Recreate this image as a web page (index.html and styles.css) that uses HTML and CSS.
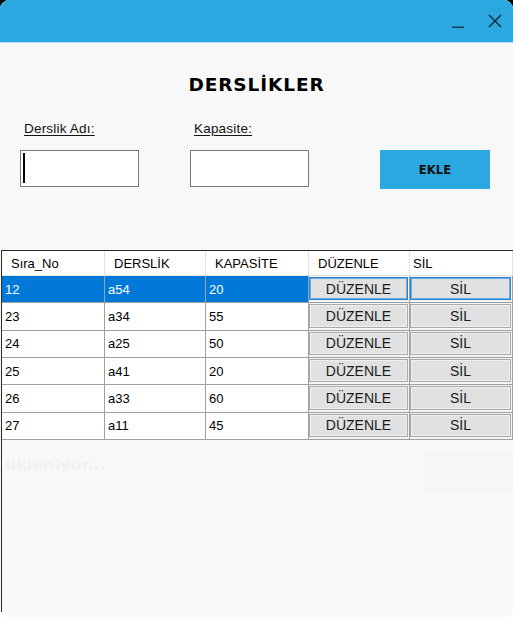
FILE: index.html
```html
<!DOCTYPE html>
<html lang="tr">
<head>
<meta charset="utf-8">
<title>Derslikler</title>
<link rel="stylesheet" href="styles.css">
</head>
<body>
<div class="window">
  <header class="titlebar">
    <div class="controls">
      <svg class="ctrl-min" width="12" height="14" viewBox="0 0 12 14"><rect x="0" y="12.5" width="12" height="1.5" fill="#1d3d57"/></svg>
      <svg class="ctrl-close" width="14" height="14" viewBox="0 0 14 14"><path d="M1 1 L13 13 M13 1 L1 13" stroke="#0f2231" stroke-width="1.4" fill="none"/></svg>
    </div>
  </header>
  <main class="content">
    <h1 class="heading">DERSLİKLER</h1>
    <div class="form">
      <label class="label">Derslik Adı:</label>
      <label class="label">Kapasite:</label>
      <span></span>
      <div class="textbox focused"></div>
      <div class="textbox"></div>
      <button class="add-btn">EKLE</button>
    </div>
    <div class="grid">
      <div class="row head">
        <div class="c c1">Sıra_No</div>
        <div class="c c2">DERSLİK</div>
        <div class="c c3">KAPASİTE</div>
        <div class="c c4">DÜZENLE</div>
        <div class="c c5 last">SİL</div>
      </div>
      <div class="row selected">
        <div class="c c1">12</div><div class="c c2">a54</div><div class="c c3">20</div>
        <div class="c c4 bc"><span class="cellbtn">DÜZENLE</span></div>
        <div class="c c5 bc"><span class="cellbtn">SİL</span></div>
      </div>
      <div class="row">
        <div class="c c1">23</div><div class="c c2">a34</div><div class="c c3">55</div>
        <div class="c c4 bc"><span class="cellbtn">DÜZENLE</span></div>
        <div class="c c5 bc"><span class="cellbtn">SİL</span></div>
      </div>
      <div class="row">
        <div class="c c1">24</div><div class="c c2">a25</div><div class="c c3">50</div>
        <div class="c c4 bc"><span class="cellbtn">DÜZENLE</span></div>
        <div class="c c5 bc"><span class="cellbtn">SİL</span></div>
      </div>
      <div class="row">
        <div class="c c1">25</div><div class="c c2">a41</div><div class="c c3">20</div>
        <div class="c c4 bc"><span class="cellbtn">DÜZENLE</span></div>
        <div class="c c5 bc"><span class="cellbtn">SİL</span></div>
      </div>
      <div class="row">
        <div class="c c1">26</div><div class="c c2">a33</div><div class="c c3">60</div>
        <div class="c c4 bc"><span class="cellbtn">DÜZENLE</span></div>
        <div class="c c5 bc"><span class="cellbtn">SİL</span></div>
      </div>
      <div class="row">
        <div class="c c1">27</div><div class="c c2">a11</div><div class="c c3">45</div>
        <div class="c c4 bc"><span class="cellbtn">DÜZENLE</span></div>
        <div class="c c5 bc"><span class="cellbtn">SİL</span></div>
      </div>
      <div class="ghost-text">ükleniyor...</div>
      <div class="ghost-box"></div>
    </div>
  </main>
</div>
</body>
</html>
```
FILE: styles.css
```css
html, body {
  margin: 0;
  padding: 0;
}
body {
  width: 513px;
  height: 624px;
  background: linear-gradient(to bottom, #000 0, #000 20px, #fff 20px);
  font-family: "Liberation Sans", Arial, sans-serif;
}
.window {
  width: 513px;
  height: 617px;
  display: flex;
  flex-direction: column;
  background: #f8f8f8;
  border-radius: 9px 9px 8px 8px;
  overflow: hidden;
}
.titlebar {
  height: 42px;
  flex: none;
  background: #2ca8e1;
  border-bottom: 1px solid #b4def3;
  display: flex;
  justify-content: flex-end;
  align-items: flex-start;
}
.controls {
  display: flex;
  gap: 24px;
  padding: 14px 11px 0 0;
}
.controls svg {
  display: block;
}
.content {
  flex: 1;
  display: flex;
  flex-direction: column;
  position: relative;
}
.heading {
  margin: 31px 0 0;
  height: 22px;
  line-height: 22px;
  text-align: center;
  font-family: "DejaVu Sans", Verdana, sans-serif;
  font-weight: bold;
  font-size: 18.5px;
  letter-spacing: 0.9px;
  color: #000;
}
.form {
  margin: 25px 0 0 20px;
  display: grid;
  grid-template-columns: 119px 119px 110px;
  column-gap: 51px;
  row-gap: 13px;
  align-items: start;
}
.label {
  padding-left: 4px;
  height: 16px;
  line-height: 16px;
  font-size: 13.5px;
  letter-spacing: 0.2px;
  color: #111;
  text-decoration: underline;
  text-underline-offset: 2px;
}
.textbox {
  height: 37px;
  box-sizing: border-box;
  background: #fff;
  border: 1px solid #7a7a7a;
  position: relative;
}
.textbox.focused::after {
  content: "";
  position: absolute;
  left: 2px;
  top: 2px;
  width: 2px;
  height: 30px;
  background: #000;
}
.add-btn {
  margin: 0 0 0 20px;
  width: 110px;
  height: 39px;
  border: none;
  background: #2ca8e1;
  color: #111;
  font-family: "DejaVu Sans Condensed", Tahoma, sans-serif;
  font-weight: bold;
  font-size: 13px;
  padding: 0;
}
.grid {
  margin: 61px 0 5px 1px;
  flex: 1;
  width: 512px;
  box-sizing: border-box;
  border-top: 1px solid #2a2a2a;
  border-left: 1px solid #2a2a2a;
  position: relative;
  overflow: hidden;
  font-size: 13px;
  color: #000;
}
.row {
  display: flex;
  height: 27.34px;
  box-sizing: border-box;
  border-bottom: 1px solid #a0a0a0;
  background: #fff;
}
.row.head {
  height: 25px;
  border-bottom: 1px solid #e4e4e4;
}
.c {
  box-sizing: border-box;
  border-right: 1px solid #a0a0a0;
  display: flex;
  align-items: center;
  padding-left: 3px;
  white-space: nowrap;
}
.head .c {
  border-right-color: #e4e4e4;
  padding-left: 9px;
}
.head .c.last {
  padding-left: 3px;
}
.c1 { width: 103px; }
.c2 { width: 101px; }
.c3 { width: 103px; }
.c4 { width: 101px; }
.c5 { width: 103px; }
.selected .c {
  background: #0078d7;
  color: #fff;
}
.selected .c.bc,
.c.bc {
  background: #f4f4f4;
  color: #1a1a1a;
  padding: 1px 1px 2px 0;
  align-items: stretch;
}
.cellbtn {
  flex: 1;
  display: flex;
  align-items: center;
  justify-content: center;
  background: #e1e1e1;
  border: 1px solid #a9a9a9;
  box-shadow: inset 0 0 0 1px #f0f0f0;
  font-size: 14px;
  color: #1a1a1a;
}
.selected .cellbtn {
  border-color: #2b84d3;
  box-shadow: inset 0 0 0 1px #6aaee6;
}
.ghost-text {
  position: absolute;
  left: 3px;
  top: 204px;
  font-family: "DejaVu Sans", sans-serif;
  font-weight: bold;
  font-size: 16px;
  color: #f1f1f1;
}
.ghost-box {
  position: absolute;
  left: 421px;
  top: 202px;
  width: 100px;
  height: 38px;
  background: #f5f6f8;
}
```
